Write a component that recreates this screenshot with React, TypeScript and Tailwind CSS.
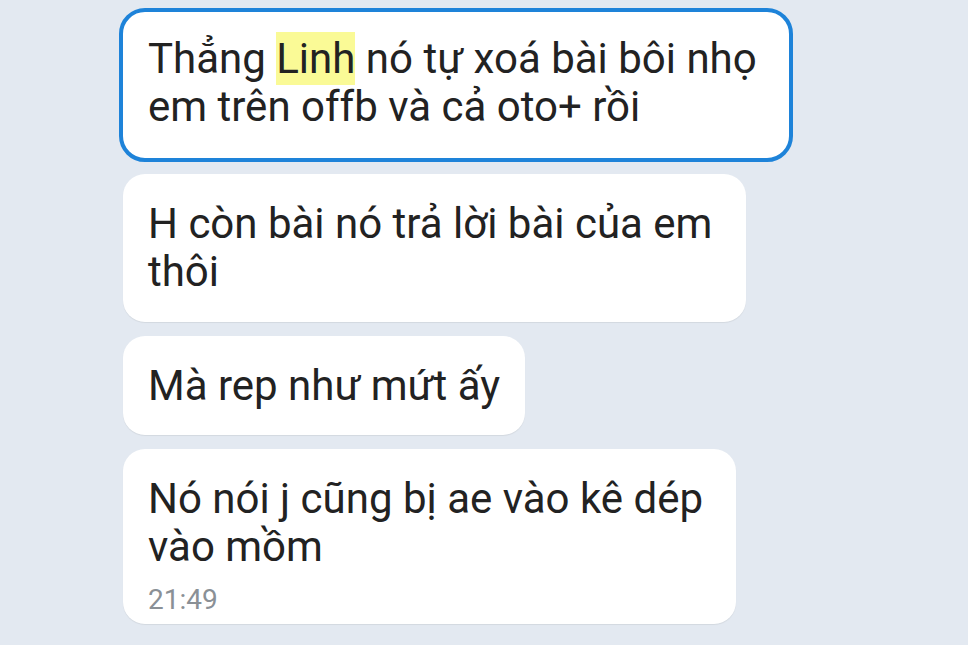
import React from "react";

const font = { fontFamily: "Roboto, 'Noto Sans', sans-serif" };

export default function App() {
  return (
    <div
      className="w-[968px] h-[645px] bg-[#e3e9f1] overflow-hidden flex flex-col items-start pl-[123px] pt-[8px]"
      style={font}
    >
      <div className="ml-[-4px] w-[674px] h-[154px] rounded-[26px] border-4 border-[#1e83d9] bg-white px-[25px] pt-[23px] text-[42px] leading-[48px] text-[#222222] whitespace-nowrap">
        Thẳng <span className="bg-[#fafa96] py-[2px]">Linh</span> nó tự xoá bài bôi nhọ
        <br />
        em trên offb và cả oto+ rồi
      </div>
      <div className="mt-[12px] w-[623px] h-[148px] rounded-[22px] bg-white px-[25px] pt-[26px] text-[42px] leading-[48px] text-[#222222] whitespace-nowrap shadow-[0_1px_1px_rgba(0,0,0,0.07)]">
        H còn bài nó trả lời bài của em
        <br />
        thôi
      </div>
      <div className="mt-[14px] w-[402px] h-[99px] rounded-[22px] bg-white px-[25px] pt-[26px] text-[42px] leading-[48px] text-[#222222] whitespace-nowrap shadow-[0_1px_1px_rgba(0,0,0,0.07)]">
        Mà rep như mứt ấy
      </div>
      <div className="mt-[14px] w-[613px] h-[175px] rounded-[22px] bg-white px-[25px] pt-[26px] text-[#222222] whitespace-nowrap shadow-[0_1px_1px_rgba(0,0,0,0.07)]">
        <div className="text-[42px] leading-[48px]">
          Nó nói j cũng bị ae vào kê dép
          <br />
          vào mồm
        </div>
        <div className="mt-[12px] text-[28px] leading-[34px] text-[#8a9096]">21:49</div>
      </div>
    </div>
  );
}
